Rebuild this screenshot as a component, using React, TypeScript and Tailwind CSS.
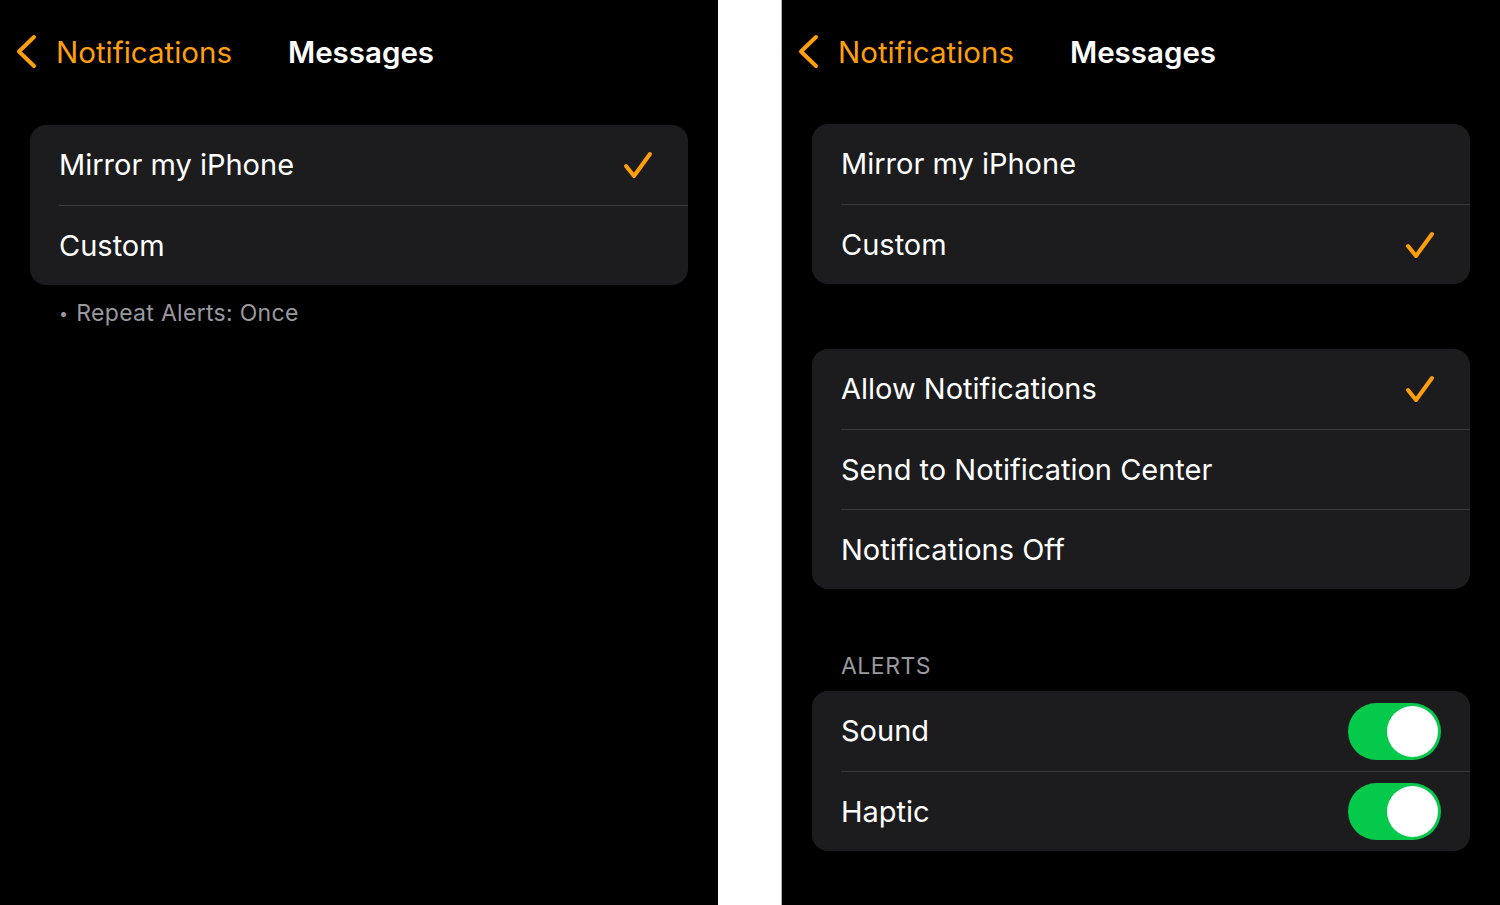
import React from 'react'

const font = { fontFamily: 'Inter, "Noto Sans", sans-serif' }

function Chevron() {
  return (
    <svg width="24" height="36" viewBox="0 0 24 36" className="shrink-0">
      <polyline points="19,3 4,17.5 19,32" fill="none" stroke="#ff9f0a" strokeWidth="4" strokeLinecap="round" strokeLinejoin="round" />
    </svg>
  )
}

function Check() {
  return (
    <svg width="32" height="32" viewBox="0 0 32 32" className="shrink-0">
      <polyline points="4,17 12,27 28,5" fill="none" stroke="#ff9f0a" strokeWidth="4" strokeLinecap="round" strokeLinejoin="round" />
    </svg>
  )
}

function Toggle() {
  return (
    <div className="w-[93px] h-[57px] rounded-full bg-[#04c94b] p-[3px] flex justify-end items-center shrink-0">
      <div className="w-[51px] h-[51px] rounded-full bg-white" />
    </div>
  )
}

function Header() {
  return (
    <div className="flex items-center h-[36px] mt-[34px]">
      <div className="ml-[15px] w-[41px]">
        <Chevron />
      </div>
      <span className="text-[29.5px] leading-[36px] text-[#ff9f0a]">Notifications</span>
      <span className="ml-[56px] text-[29.5px] leading-[36px] font-semibold text-white">Messages</span>
    </div>
  )
}

type Row = { label: string; check?: boolean; toggle?: boolean }

function Card({ rows, className = '' }: { rows: Row[]; className?: string }) {
  return (
    <div className={`mx-[30px] rounded-[16px] bg-[#1c1c1e] ${className}`}>
      {rows.map((r, i) => (
        <div key={r.label} className={`ml-[29px] flex items-center h-[80px] pr-[29px] ${i > 0 ? 'border-t border-[#3a3a3c]' : ''}`}>
          <span className="flex-1 text-[29px] text-white">{r.label}</span>
          {r.check && <div className="mr-[5px]"><Check /></div>}
          {r.toggle && <Toggle />}
        </div>
      ))}
    </div>
  )
}

export default function App() {
  return (
    <div className="flex w-[1500px] h-[905px] bg-white" style={font}>
      <div className="w-[718px] h-full bg-black flex flex-col">
        <Header />
        <Card className="mt-[55px]" rows={[{ label: 'Mirror my iPhone', check: true }, { label: 'Custom' }]} />
        <p className="mt-[13px] ml-[59px] flex items-center text-[23px] leading-[30px] tracking-[0.3px] text-[#98989f]">
          <span className="text-[16px] mr-[8px]">•</span>Repeat Alerts: Once
        </p>
      </div>
      <div className="w-[63px] h-full bg-white" />
      <div className="w-px h-full bg-[#b0b0b0]" />
      <div className="w-[718px] h-full bg-black flex flex-col">
        <Header />
        <Card className="mt-[54px]" rows={[{ label: 'Mirror my iPhone' }, { label: 'Custom', check: true }]} />
        <Card className="mt-[65px]" rows={[{ label: 'Allow Notifications', check: true }, { label: 'Send to Notification Center' }, { label: 'Notifications Off' }]} />
        <p className="mt-[62px] ml-[59px] text-[23px] leading-[30px] tracking-[0.5px] text-[#98989f] mb-[10px]">ALERTS</p>
        <Card rows={[{ label: 'Sound', toggle: true }, { label: 'Haptic', toggle: true }]} />
      </div>
    </div>
  )
}
